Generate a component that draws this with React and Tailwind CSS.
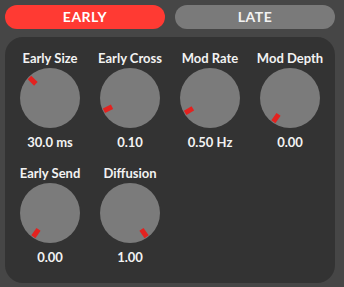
import React from 'react';

const knobs = [
  { label: 'Early Size', value: '30.0 ms', angle: -45 },
  { label: 'Early Cross', value: '0.10', angle: -116 },
  { label: 'Mod Rate', value: '0.50 Hz', angle: -121 },
  { label: 'Mod Depth', value: '0.00', angle: -145 },
  { label: 'Early Send', value: '0.00', angle: -145 },
  { label: 'Diffusion', value: '1.00', angle: 145 },
];

const Knob = ({ label, value, angle }) => (
  <div className="flex flex-col items-center">
    <div className="h-[16px] leading-[16px] text-[13px] font-bold text-[#f2f2f2]">{label}</div>
    <svg width="60" height="60" viewBox="-30 -30 60 60" className="mt-[2px]">
      <circle cx="0" cy="0" r="30" fill="#7b7b7b" />
      <rect x="-2.5" y="-29" width="5" height="9" fill="#e3221f" transform={`rotate(${angle})`} />
    </svg>
    <div className="mt-[6px] h-[16px] leading-[16px] text-[13px] font-bold text-[#f2f2f2]">{value}</div>
  </div>
);

export default function App() {
  return (
    <div
      className="w-[344px] h-[287px] bg-[#464646] pt-[5px] pl-[5px] pr-[9px] overflow-hidden"
      style={{ fontFamily: 'Lato, "Open Sans", sans-serif' }}
    >
      {/* Tabs */}
      <div className="flex gap-[10px] h-[24px]">
        <button className="flex-1 rounded-full bg-[#ff3a33] text-white text-[14px] font-bold tracking-[0.5px] leading-[24px]">
          EARLY
        </button>
        <button className="flex-1 rounded-full bg-[#7a7a7a] text-[#f2f2f2] text-[14px] font-bold tracking-[0.5px] leading-[24px]">
          LATE
        </button>
      </div>

      {/* Panel */}
      <div className="mt-[8px] h-[246px] rounded-[18px] bg-[#333333] px-[5px] pt-[13px]">
        <div className="grid grid-cols-4 gap-y-[15px]">
          {knobs.map((k) => (
            <Knob key={k.label} {...k} />
          ))}
        </div>
      </div>
    </div>
  );
}
